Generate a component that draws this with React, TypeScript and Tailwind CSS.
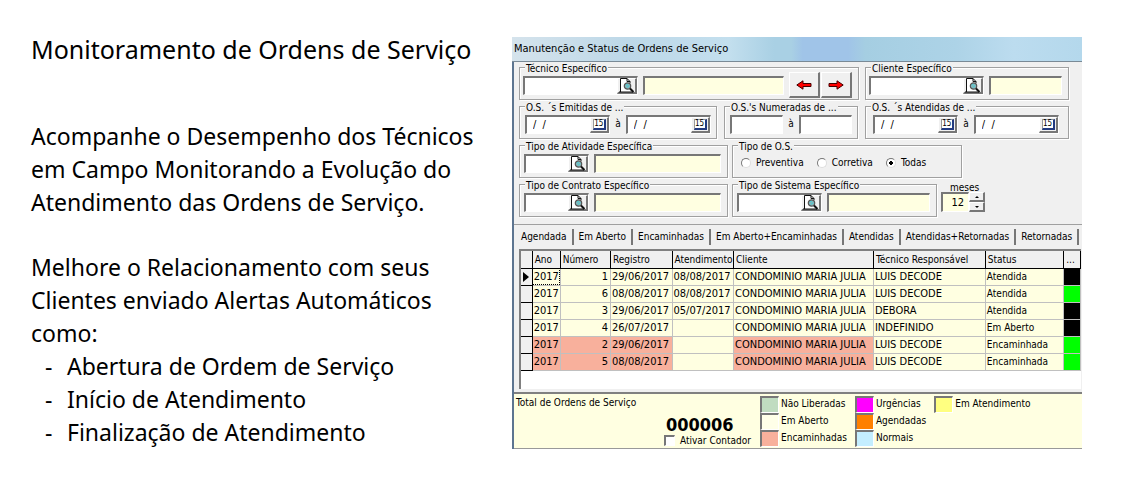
import type { ReactNode } from "react";
import clsx from "clsx";

const sunken =
  "border-t-2 border-l-2 border-r border-b border-t-[#777] border-l-[#777] border-r-white border-b-white";
const raised =
  "border-t border-l border-r-2 border-b-2 border-t-white border-l-white border-r-[#777] border-b-[#777] bg-[#f0f0f0]";

interface GroupProps {
  title: string;
  className?: string;
  children: ReactNode;
}

function Group({ title, className, children }: GroupProps) {
  return (
    <fieldset
      className={clsx(
        "relative flex h-[33px] min-w-0 items-center border border-[#a0a0a0] pt-[3px] shadow-[inset_1px_1px_0_#fff,1px_1px_0_#fff]",
        className
      )}
    >
      <legend className="absolute -top-[6px] left-[5px] bg-[#f0f0f0] px-px leading-[14px] whitespace-nowrap">
        {title}
      </legend>
      {children}
    </fieldset>
  );
}

function LookupIcon() {
  return (
    <svg width="17" height="15" viewBox="0 0 17 15" aria-hidden="true">
      <path d="M2.5 .5h6.500l3 3v10.500h-9.500z" fill="#fff" />
      <path d="M2.500 14V.5H9l3 3V5M1 14h14" fill="none" stroke="#111" />
      <path d="M9 .5v3h3" fill="none" stroke="#111" />
      <circle cx="9.500" cy="8" r="3.200" fill="#8cb4b8" stroke="#555" strokeWidth="1.200" />
      <path d="M8 7.500l1.500-1.500M9 9.500l2-2" stroke="#19e0ea" />
      <path d="M12 10.500l3.500 3.500" stroke="#111" strokeWidth="2" />
    </svg>
  );
}

function LookupField({ label, className }: { label: string; className: string }) {
  return (
    <div className={clsx("flex h-[19px] shrink-0 bg-white", sunken, className)}>
      <input type="text" aria-label={label} className="min-w-0 flex-1 px-1 outline-none" />
      <button
        type="button"
        aria-label={`Procurar ${label}`}
        className={clsx("flex w-[20px] items-center justify-center", raised)}
      >
        <LookupIcon />
      </button>
    </div>
  );
}

function NameField({ label }: { label: string }) {
  return (
    <input
      type="text"
      readOnly
      aria-label={label}
      className={clsx("h-[19px] min-w-0 flex-1 bg-[#ffffe1] px-1", sunken)}
    />
  );
}

function NumberField({ label }: { label: string }) {
  return (
    <input
      type="text"
      aria-label={label}
      className={clsx("h-[19px] min-w-0 flex-1 bg-white px-1", sunken)}
    />
  );
}

function DateField({ label }: { label: string }) {
  return (
    <div className={clsx("flex h-[19px] min-w-0 flex-1 bg-white", sunken)}>
      <input
        type="text"
        aria-label={label}
        defaultValue="/  /"
        className="min-w-0 flex-1 pl-[6px] text-[11px] whitespace-pre outline-none"
      />
      <button
        type="button"
        aria-label={`Calendário ${label}`}
        className={clsx("flex w-[19px] items-center justify-center", raised)}
      >
        <span className="h-[11px] w-[13px] border-t border-r-2 border-b-2 border-l border-t-[#999] border-r-[#223a80] border-b-[#223a80] border-l-[#999] bg-white text-center text-[8px] leading-[8px]">
          15
        </span>
      </button>
    </div>
  );
}

function ArrowButton({ label, flip }: { label: string; flip?: boolean }) {
  return (
    <button
      type="button"
      aria-label={label}
      className={clsx("flex h-[26px] w-[31px] shrink-0 items-center justify-center", raised)}
    >
      <svg
        width="16"
        height="10"
        viewBox="0 0 16 10"
        aria-hidden="true"
        className={clsx(flip && "rotate-180")}
      >
        <path d="M.8 5L7 .8V3.500h8v3H7v2.700z" fill="#f00" stroke="#400" strokeWidth="1" />
      </svg>
    </button>
  );
}

const tabs = [
  "Agendada",
  "Em Aberto",
  "Encaminhadas",
  "Em Aberto+Encaminhadas",
  "Atendidas",
  "Atendidas+Retornadas",
  "Retornadas",
];

const orders = [
  { number: 1, opened: "29/06/2017", served: "08/08/2017", tech: "LUIS DECODE", status: "Atendida", sent: false, flag: "bg-black" },
  { number: 6, opened: "08/08/2017", served: "08/08/2017", tech: "LUIS DECODE", status: "Atendida", sent: false, flag: "bg-[#00ff00]" },
  { number: 3, opened: "29/06/2017", served: "05/07/2017", tech: "DEBORA", status: "Atendida", sent: false, flag: "bg-black" },
  { number: 4, opened: "26/07/2017", served: "", tech: "INDEFINIDO", status: "Em Aberto", sent: false, flag: "bg-black" },
  { number: 2, opened: "29/06/2017", served: "", tech: "LUIS DECODE", status: "Encaminhada", sent: true, flag: "bg-[#00ff00]" },
  { number: 5, opened: "08/08/2017", served: "", tech: "LUIS DECODE", status: "Encaminhada", sent: true, flag: "bg-[#00ff00]" },
];

const headers = ["", "Ano", "Número", "Registro", "Atendimento", "Cliente", "Técnico Responsável", "Status", "..."];

const legend = [
  [
    { label: "Não Liberadas", color: "bg-[#c0dcc0]" },
    { label: "Em Aberto", color: "bg-[#ffffe8]" },
    { label: "Encaminhadas", color: "bg-[#f8b09c]" },
  ],
  [
    { label: "Urgências", color: "bg-[#ff00ff]" },
    { label: "Agendadas", color: "bg-[#ff8000]" },
    { label: "Normais", color: "bg-[#c4eeff]" },
  ],
  [{ label: "Em Atendimento", color: "bg-[#ffff80]" }],
];

function Filters() {
  return (
    <form className="flex flex-col gap-[6px] border-b border-[#a0a0a0] pt-[5px] pr-[13px] pb-[7px] pl-[5px]">
      <div className="grid grid-cols-[340fr_204fr] gap-[6px]">
        <Group title="Técnico Específico" className="gap-[5px] pr-[6px] pl-[3px]">
          <LookupField label="Técnico" className="w-[115px]" />
          <NameField label="Nome do técnico" />
          <div className="flex gap-px">
            <ArrowButton label="Anterior" />
            <ArrowButton label="Próximo" flip />
          </div>
        </Group>
        <Group title="Cliente Específico" className="gap-[5px] pr-[6px] pl-[3px]">
          <LookupField label="Cliente" className="w-[115px]" />
          <NameField label="Nome do cliente" />
        </Group>
      </div>

      <div className="grid grid-cols-[198fr_134fr_204fr] gap-[7px]">
        <Group title="O.S. ´s Emitidas de ..." className="gap-[5px] px-[5px]">
          <DateField label="Emitidas de" />
          <span>à</span>
          <DateField label="Emitidas até" />
        </Group>
        <Group title="O.S.'s Numeradas de ..." className="gap-[5px] px-[5px]">
          <NumberField label="Número inicial" />
          <span>à</span>
          <NumberField label="Número final" />
        </Group>
        <Group title="O.S. ´s Atendidas de ..." className="gap-[5px] pr-[9px] pl-[7px]">
          <DateField label="Atendidas de" />
          <span>à</span>
          <DateField label="Atendidas até" />
        </Group>
      </div>

      <div className="grid grid-cols-[209fr_230fr_103fr] gap-[4px]">
        <Group title="Tipo de Atividade Específica" className="gap-[5px] pr-[6px] pl-[4px]">
          <LookupField label="Tipo de atividade" className="w-[65px]" />
          <NameField label="Descrição da atividade" />
        </Group>
        <Group title="Tipo de O.S." className="gap-[13px] pl-[8px]">
          {["Preventiva", "Corretiva", "Todas"].map((kind) => (
            <label key={kind} className="flex items-center gap-[5px]">
              <input
                type="radio"
                name="kind"
                defaultChecked={kind === "Todas"}
                className="h-[10px] w-[10px] appearance-none rounded-full border border-t-[#777] border-r-[#ddd] border-b-[#ddd] border-l-[#777] bg-white checked:bg-[radial-gradient(circle,#000_2px,#fff_2px)]"
              />
              {kind}
            </label>
          ))}
        </Group>
      </div>

      <div className="grid grid-cols-[209fr_205fr_128fr] gap-[4px]">
        <Group title="Tipo de Contrato Específico" className="gap-[5px] pr-[6px] pl-[4px]">
          <LookupField label="Tipo de contrato" className="w-[65px]" />
          <NameField label="Descrição do contrato" />
        </Group>
        <Group title="Tipo de Sistema Específico" className="gap-[5px] pr-[6px] pl-[4px]">
          <LookupField label="Tipo de sistema" className="w-[85px]" />
          <NameField label="Descrição do sistema" />
        </Group>
        <div className="flex flex-col">
          <label htmlFor="months" className="pl-[9px] leading-[8px]">
            meses
          </label>
          <div className="flex">
            <input
              id="months"
              type="text"
              defaultValue="12"
              className={clsx("h-[20px] w-[28px] bg-[#ffffe1] pr-[4px] text-right text-[11px]", sunken)}
            />
            <div className="flex flex-col">
              <button type="button" aria-label="Aumentar" className={clsx("flex h-[10px] w-[16px] items-center justify-center", raised)}>
                <svg width="4" height="2" viewBox="0 0 4 2" aria-hidden="true"><path d="M0 2L2 0l2 2z" /></svg>
              </button>
              <button type="button" aria-label="Diminuir" className={clsx("flex h-[10px] w-[16px] items-center justify-center", raised)}>
                <svg width="4" height="2" viewBox="0 0 4 2" aria-hidden="true"><path d="M0 0l2 2 2-2z" /></svg>
              </button>
            </div>
          </div>
        </div>
      </div>
    </form>
  );
}

function OrdersTable() {
  return (
    <div className="mr-px ml-[5px] border-t-2 border-l-2 border-[#808080] bg-white pb-[18px]">
      <table className="w-full table-fixed border-collapse">
        <colgroup>
          <col className="w-[2%]" />
          <col className="w-[5%]" />
          <col className="w-[9%]" />
          <col className="w-[11%]" />
          <col className="w-[11%]" />
          <col className="w-[25%]" />
          <col className="w-[20%]" />
          <col className="w-[14%]" />
          <col className="w-[3%]" />
        </colgroup>
        <thead>
          <tr className="h-[17px] bg-[#f0f0f0]">
            {headers.map((header, i) => (
              <th key={i} scope="col" className="border-r border-b border-black p-0 pl-[2px] text-left leading-[15px] font-normal whitespace-nowrap">
                {header}
              </th>
            ))}
          </tr>
        </thead>
        <tbody className="text-[11px]">
          {orders.map((order, i) => {
            const tone = order.sent ? "bg-[#f8b09c]" : "bg-[#ffffe1]";
            const cell = "border border-[#c0c0c0] p-0 pl-px leading-[16px] whitespace-nowrap";
            return (
              <tr key={order.number} className="h-[17px] bg-[#ffffe1]">
                <td className="border-r border-b border-black bg-[#f0f0f0] p-0">
                  {i === 0 && (
                    <svg width="7" height="10" viewBox="0 0 7 10" className="ml-[2px]" aria-hidden="true">
                      <path d="M0 0l6 5-6 5z" />
                    </svg>
                  )}
                </td>
                <td className={clsx(cell, tone, i === 0 && "outline-1 -outline-offset-1 outline-black outline-dotted")}>2017</td>
                <td className={clsx(cell, tone, "pr-[2px] text-right")}>{order.number}</td>
                <td className={clsx(cell, tone)}>{order.opened}</td>
                <td className={cell}>{order.served}</td>
                <td className={clsx(cell, tone)}>CONDOMINIO MARIA JULIA</td>
                <td className={cell}>{order.tech}</td>
                <td className={clsx(cell, "text-[10px]")}>{order.status}</td>
                <td className={clsx(cell, order.flag)} />
              </tr>
            );
          })}
        </tbody>
      </table>
    </div>
  );
}

function Footer() {
  return (
    <footer className="flex border-t-2 border-b border-t-[#808080] border-b-[#999] bg-[#ffffe1] pt-[2px] pb-px pl-[2px]">
      <span className="w-[148px] leading-[14px]">Total de Ordens de Serviço</span>
      <div className="flex w-[96px] flex-col justify-end">
        <output className="pl-[2px] text-[18px] leading-[19px] font-bold">000006</output>
        <label className="flex items-center gap-[5px] leading-[13px] whitespace-nowrap">
          <input
            type="checkbox"
            className={clsx("h-[11px] w-[11px] appearance-none bg-white checked:bg-black", sunken)}
          />
          Ativar Contador
        </label>
      </div>
      <div className="flex gap-[8px]">
        {legend.map((column) => (
          <ul key={column[0].label}>
            {column.map((item) => (
              <li key={item.label} className="flex items-center gap-[2px] whitespace-nowrap">
                <span className={clsx("h-[17px] w-[19px]", sunken, item.color)} />
                {item.label}
              </li>
            ))}
          </ul>
        ))}
      </div>
    </footer>
  );
}

function OrdersWindow() {
  return (
    <section className="min-w-0 self-start font-['DejaVu_Sans_Condensed','DejaVu_Sans',sans-serif] text-[10px] leading-[14px] text-black">
      <header className="flex h-[25px] items-center border-b border-[#7a8a96] bg-[linear-gradient(90deg,#d5e3ec_0%,#bdd8e8_20%,#c3dfee_38%,#a9d0e4_46%,#a9d0e4_49%,#a0c4e8_51%,#a0c4e8_59%,#a5cee2_62%,#add3e7_78%,#bcdcef_88%,#b4d8ec_100%)] pl-[2px]">
        <h2 className="text-[11px]">Manutenção e Status de Ordens de Serviço</h2>
      </header>
      <div className="border-l-2 border-[#5d7590] bg-[#f0f0f0]">
        <Filters />
        <div role="tablist" className="flex h-[24px] items-center pl-[2px]">
          {tabs.map((tab, i) => (
            <button
              key={tab}
              type="button"
              role="tab"
              aria-selected={i === 0}
              className="h-[16px] border-r-2 border-[#777] px-[5px] leading-[16px] whitespace-nowrap"
            >
              {tab}
            </button>
          ))}
        </div>
        <OrdersTable />
        <div className="h-[3px]" />
        <Footer />
      </div>
    </section>
  );
}

export default function App() {
  return (
    <main className="grid grid-cols-[481fr_570fr] bg-white pt-[37px] pr-[41px] pb-[38px] pl-[31px]">
      <article className="min-w-0 font-['Noto_Sans',sans-serif] text-[23px] leading-[33px] text-black">
        <h1 className="-mt-[4px] mb-[54px] text-[25px]">Monitoramento de Ordens de Serviço</h1>
        <p className="mb-[32px]">
          Acompanhe o Desempenho dos Técnicos
          <br />
          em Campo Monitorando a Evolução do
          <br />
          Atendimento das Ordens de Serviço.
        </p>
        <p>
          Melhore o Relacionamento com seus
          <br />
          Clientes enviado Alertas Automáticos
          <br />
          como:
        </p>
        <ul className="pl-[14px]">
          {["Abertura de Ordem de Serviço", "Início de Atendimento", "Finalização de Atendimento"].map((item) => (
            <li key={item} className="flex">
              <span className="w-[22px]">-</span>
              {item}
            </li>
          ))}
        </ul>
      </article>
      <OrdersWindow />
    </main>
  );
}
